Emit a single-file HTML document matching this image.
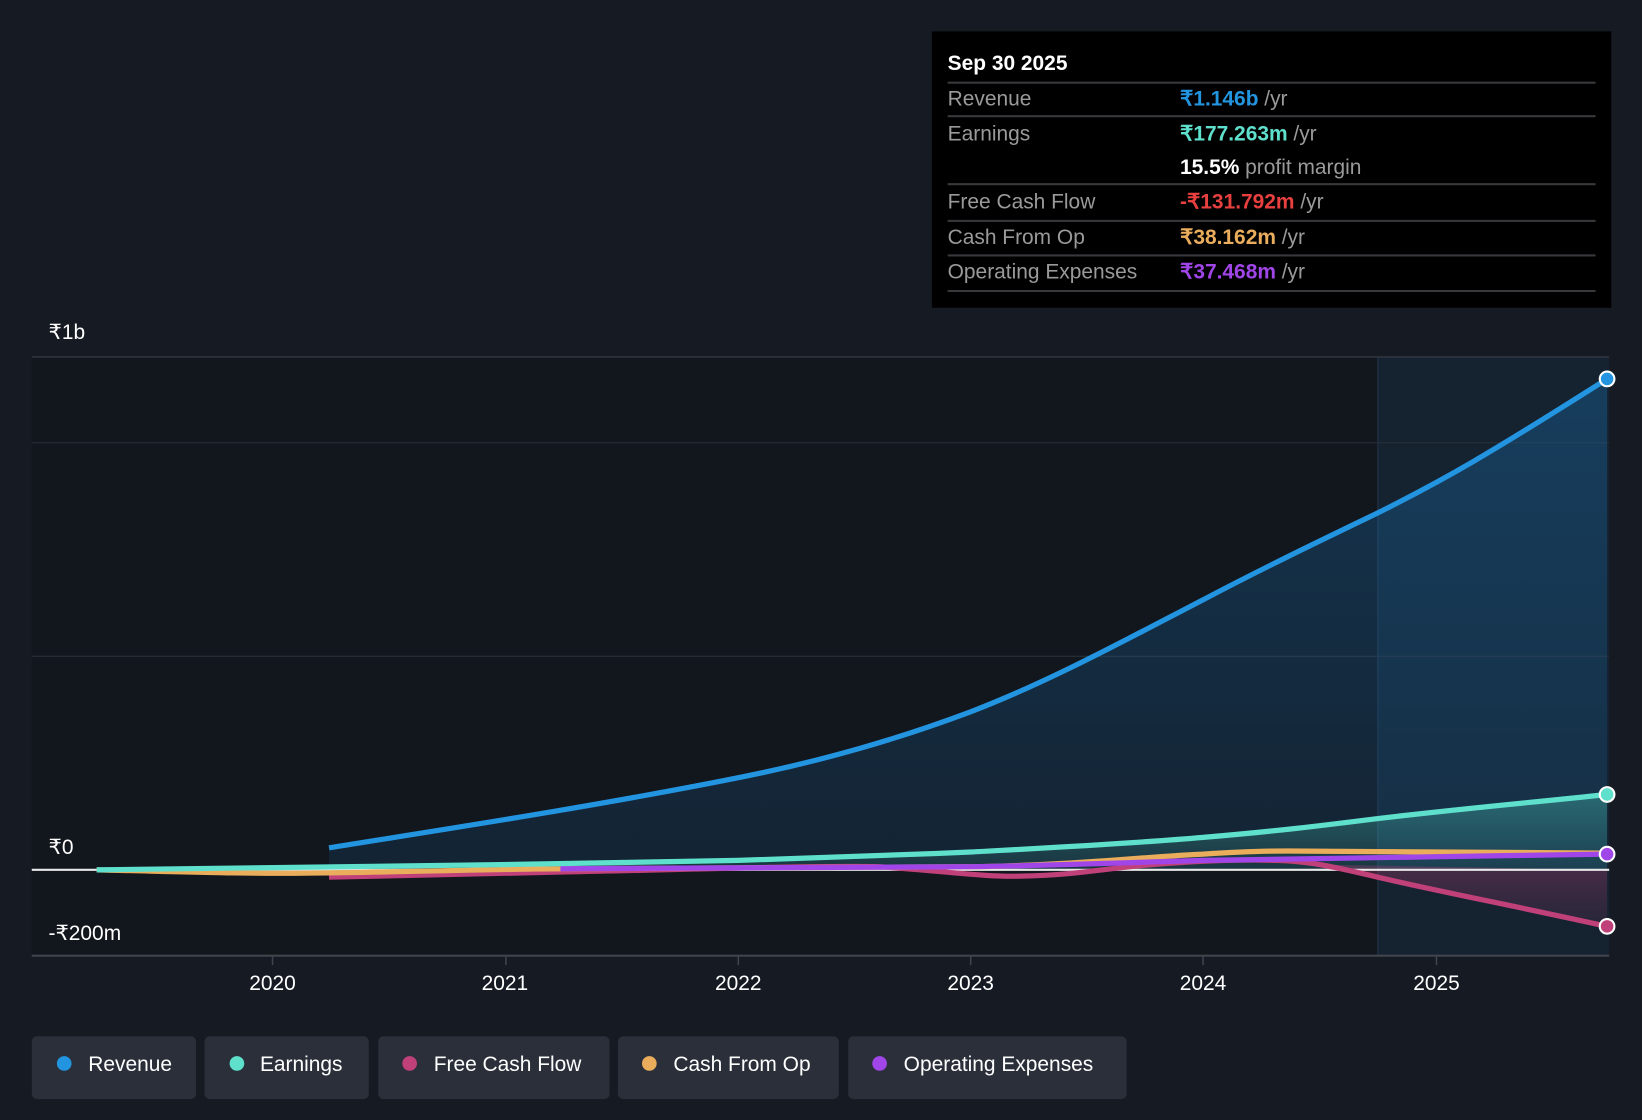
<!DOCTYPE html>
<html><head><meta charset="utf-8">
<style>
html,body{margin:0;padding:0;background:#151a23;}
svg{display:block;}
text{font-family:"Liberation Sans",sans-serif;}
</style></head>
<body>
<svg width="1642" height="1120" viewBox="0 0 1568 1070" xmlns="http://www.w3.org/2000/svg">
<defs>
<linearGradient id="rg" x1="0" y1="0" x2="0" y2="1">
<stop offset="0" stop-color="#1a6fb0" stop-opacity="0.35"/>
<stop offset="1" stop-color="#1a6fb0" stop-opacity="0.15"/>
</linearGradient>
<linearGradient id="eg" x1="0" y1="0" x2="0" y2="1">
<stop offset="0" stop-color="#4fd1c0" stop-opacity="0.35"/>
<stop offset="1" stop-color="#4fd1c0" stop-opacity="0.1"/>
</linearGradient>
<linearGradient id="fg" x1="0" y1="0" x2="0" y2="1">
<stop offset="0" stop-color="#c0407a" stop-opacity="0.3"/>
<stop offset="1" stop-color="#c0407a" stop-opacity="0.1"/>
</linearGradient>
</defs>
<rect width="1568" height="1070" fill="#151a23"/>
<!-- plot backgrounds -->
<rect x="30" y="341" width="1286" height="572" fill="#12161d"/>
<rect x="1316" y="341" width="221" height="572" fill="#152331"/>
<line x1="1316" y1="341" x2="1316" y2="913" stroke="#24354a" stroke-width="1"/>
<!-- grid -->
<line x1="30" y1="341" x2="1537" y2="341" stroke="#3a3f48" stroke-width="1"/>
<line x1="30" y1="423" x2="1537" y2="423" stroke="#2a2f38" stroke-width="1"/>
<line x1="30" y1="627" x2="1537" y2="627" stroke="#2a2f38" stroke-width="1"/>
<!-- revenue area -->
<path d="M314,810 C400,796 560,772 705,743 C790,726 860,705 927,680 C1000,652 1070,614 1149,573 C1210,541 1260,517 1316,490 C1380,458 1420,435 1535,362 L1535,831 L314,831 Z" fill="url(#rg)"/>
<path d="M92,831 C300,829 500,826 705,822 C800,819 860,817 927,814 C1000,810 1080,806 1149,800 C1220,794 1260,789 1316,782 C1400,772 1460,767 1535,759 L1535,831 L92,831 Z" fill="url(#eg)"/>
<path d="M1260,826 C1290,830 1300,834 1316,838 C1360,848 1420,860 1535,885 L1535,831 Z" fill="url(#fg)"/>
<!-- zero line -->
<line x1="30" y1="831" x2="1537" y2="831" stroke="#e8e8e8" stroke-width="2"/>
<!-- lines -->
<path d="M314,810 C400,796 560,772 705,743 C790,726 860,705 927,680 C1000,652 1070,614 1149,573 C1210,541 1260,517 1316,490 C1380,458 1420,435 1535,362" fill="none" stroke="#2394df" stroke-width="5"/>
<path d="M314,838 C400,836 480,835 540,833 C650,831 760,827 840,828 C900,832 940,838 975,837 C1030,836 1060,829 1100,826 C1150,822 1190,821 1220,822 C1250,823 1270,827 1316,838 C1380,853 1440,864 1535,885" fill="none" stroke="#c0407a" stroke-width="5"/>
<path d="M92,831 C180,833 230,835 300,834 C400,833 480,830 540,830 C700,829 850,829 927,828 C1020,827 1100,818 1149,816 C1180,814 1200,813 1230,813 C1350,814 1450,815 1535,815" fill="none" stroke="#e9ad5c" stroke-width="5"/>
<path d="M535,830 C700,829 850,829 927,828 C1000,827 1080,824 1149,822 C1250,820 1400,818 1535,816" fill="none" stroke="#a046e8" stroke-width="5"/>
<path d="M92,831 C300,829 500,826 705,822 C800,819 860,817 927,814 C1000,810 1080,806 1149,800 C1220,794 1260,789 1316,782 C1400,772 1460,767 1535,759" fill="none" stroke="#5fe0cc" stroke-width="5"/>
<!-- end dots -->
<circle cx="1535" cy="362" r="7" fill="#2394df" stroke="#fff" stroke-width="2"/>
<circle cx="1535" cy="759" r="7" fill="#5fe0cc" stroke="#fff" stroke-width="2"/>
<circle cx="1535" cy="816" r="7" fill="#a046e8" stroke="#fff" stroke-width="2"/>
<circle cx="1535" cy="885" r="7" fill="#c0407a" stroke="#fff" stroke-width="2"/>
<!-- axis -->
<line x1="30" y1="913" x2="1537" y2="913" stroke="#3f444d" stroke-width="2"/>
<g stroke="#3f444d" stroke-width="1.5">
<line x1="260" y1="913" x2="260" y2="922"/><line x1="483" y1="913" x2="483" y2="922"/>
<line x1="705" y1="913" x2="705" y2="922"/><line x1="927" y1="913" x2="927" y2="922"/>
<line x1="1149" y1="913" x2="1149" y2="922"/><line x1="1372" y1="913" x2="1372" y2="922"/>
</g>
<g fill="#ffffff" font-size="20" text-anchor="middle">
<text x="260" y="946">2020</text><text x="482" y="946">2021</text><text x="705" y="946">2022</text>
<text x="927" y="946">2023</text><text x="1149" y="946">2024</text><text x="1372" y="946">2025</text>
</g>
<g fill="#ffffff" font-size="20">
<text x="46" y="324">₹1b</text>
<text x="46" y="816">₹0</text>
<text x="46" y="898">-₹200m</text>
</g>
<!-- tooltip -->
<rect x="890" y="30" width="649" height="264" fill="#000"/>
<g stroke="#38393c" stroke-width="2">
<line x1="905" y1="79" x2="1524" y2="79"/><line x1="905" y1="111" x2="1524" y2="111"/>
<line x1="905" y1="176" x2="1524" y2="176"/><line x1="905" y1="211" x2="1524" y2="211"/>
<line x1="905" y1="244" x2="1524" y2="244"/><line x1="905" y1="278" x2="1524" y2="278"/>
</g>
<g font-size="20">
<text x="905" y="67" fill="#fff" font-weight="bold">Sep 30 2025</text>
<text x="905" y="101" fill="#9a9a9a">Revenue</text>
<text x="905" y="134" fill="#9a9a9a">Earnings</text>
<text x="905" y="199" fill="#9a9a9a">Free Cash Flow</text>
<text x="905" y="233" fill="#9a9a9a">Cash From Op</text>
<text x="905" y="266" fill="#9a9a9a">Operating Expenses</text>
<text x="1127" y="101"><tspan fill="#2394df" font-weight="bold">₹1.146b</tspan><tspan fill="#9a9a9a"> /yr</tspan></text>
<text x="1127" y="134"><tspan fill="#5fe0cc" font-weight="bold">₹177.263m</tspan><tspan fill="#9a9a9a"> /yr</tspan></text>
<text x="1127" y="166"><tspan fill="#fff" font-weight="bold">15.5%</tspan><tspan fill="#9a9a9a"> profit margin</tspan></text>
<text x="1127" y="199"><tspan fill="#e8403f" font-weight="bold">-₹131.792m</tspan><tspan fill="#9a9a9a"> /yr</tspan></text>
<text x="1127" y="233"><tspan fill="#e9ad5c" font-weight="bold">₹38.162m</tspan><tspan fill="#9a9a9a"> /yr</tspan></text>
<text x="1127" y="266"><tspan fill="#a046e8" font-weight="bold">₹37.468m</tspan><tspan fill="#9a9a9a"> /yr</tspan></text>
</g>
<!-- legend -->
<g font-size="20" fill="#fff">
<rect x="30" y="990" width="157" height="60" rx="5" fill="#2a2f39"/>
<circle cx="61" cy="1016" r="7" fill="#2394df"/><text x="84" y="1023">Revenue</text>
<rect x="195" y="990" width="157" height="60" rx="5" fill="#2a2f39"/>
<circle cx="226" cy="1016" r="7" fill="#5fe0cc"/><text x="248" y="1023">Earnings</text>
<rect x="361" y="990" width="221" height="60" rx="5" fill="#2a2f39"/>
<circle cx="391" cy="1016" r="7" fill="#c0407a"/><text x="414" y="1023">Free Cash Flow</text>
<rect x="590" y="990" width="211" height="60" rx="5" fill="#2a2f39"/>
<circle cx="620" cy="1016" r="7" fill="#e9ad5c"/><text x="643" y="1023">Cash From Op</text>
<rect x="810" y="990" width="266" height="60" rx="5" fill="#2a2f39"/>
<circle cx="840" cy="1016" r="7" fill="#a046e8"/><text x="863" y="1023">Operating Expenses</text>
</g>
</svg>
</body></html>
